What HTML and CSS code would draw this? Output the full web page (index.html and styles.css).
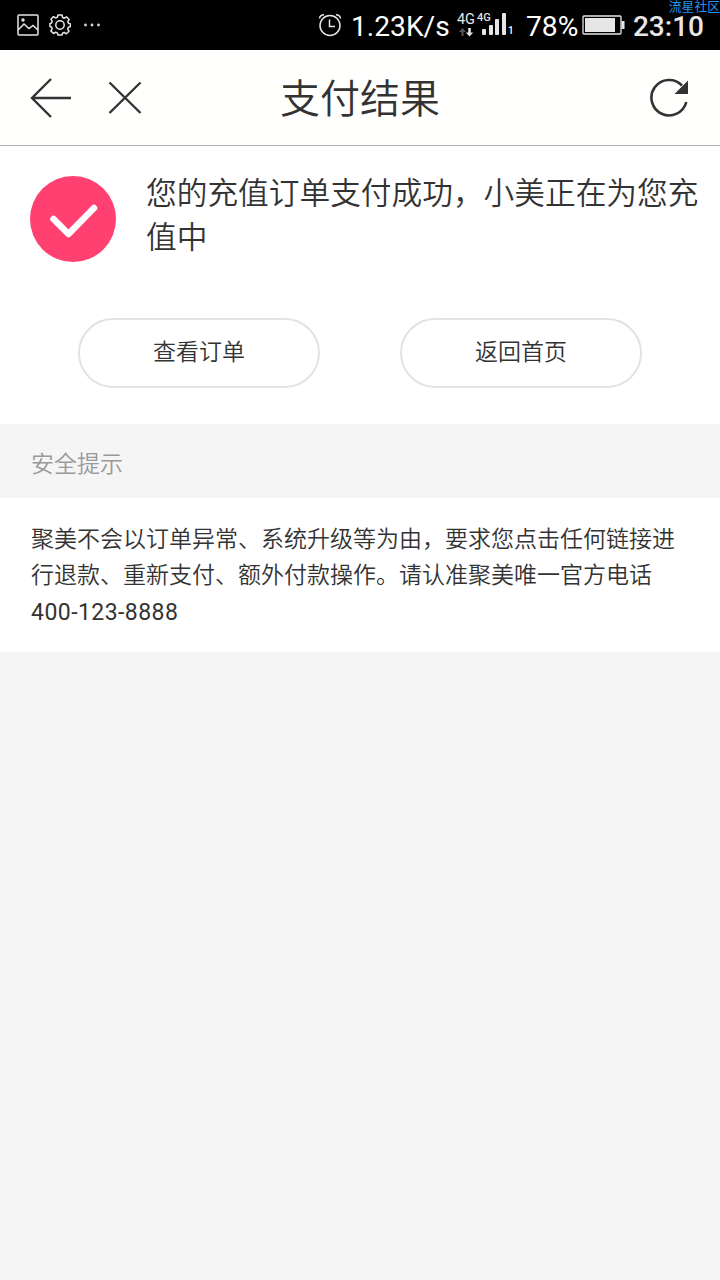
FILE: index.html
```html
<!DOCTYPE html>
<html lang="zh-CN">
<head>
  <meta charset="UTF-8">
  <title>支付结果</title>
  <link rel="stylesheet" href="styles.css">
</head>
<body>
  <div class="status-bar">
    <div class="status-left">
      <svg width="22" height="22" viewBox="0 0 22 22" fill="none" stroke="#e6e6e6" stroke-width="1.5">
        <rect x="1" y="1" width="20" height="20" rx="1"/>
        <path d="M1 16L7 10L12 14.5L16 11.5L21 16"/>
        <circle cx="6" cy="6" r="1.7" fill="#e6e6e6" stroke="none"/>
      </svg>
      <svg width="22" height="22" viewBox="0 0 22 22" fill="none" stroke="#e6e6e6" stroke-width="1.5" stroke-linejoin="round">
        <path d="M9 1h4l.6 2.500 1.700.7 2.200-1.300 2.600 2.600-1.300 2.200.7 1.600 2 .7v2.500l-2.100.8-.7 1.700 1.300 2.200-2.600 2.600-2.200-1.300-1.700.7L13 21H9l-.6-2.100-1.700-.7-2.200 1.300-2.600-2.600 1.300-2.200-.7-1.700L.9 12.500V9.700L2.500 9l.7-1.600-1.300-2.200 2.600-2.600 2.200 1.300 1.700-.7z"/>
        <circle cx="11" cy="11" r="4.2"/>
      </svg>
      <svg class="more" width="18" height="22" viewBox="0 0 18 22" fill="#d6d6d6">
        <circle cx="2.5" cy="11" r="1.4"/>
        <circle cx="9" cy="11" r="1.4"/>
        <circle cx="15.5" cy="11" r="1.4"/>
      </svg>
    </div>
    <div class="status-right">
      <svg class="alarm" width="24" height="24" viewBox="0 0 24 24" fill="none" stroke="#e6e6e6" stroke-width="1.5">
        <circle cx="12" cy="12.5" r="10"/>
        <path d="M11.500 6.500V13.500H17M1.500 5.500Q2 2 6 1.800M22.500 5.500Q22 2 18 1.800"/>
      </svg>
      <span class="speed">1.23K/s</span>
      <div class="network">
        <span class="net-big">4G</span>
        <svg width="16" height="10" viewBox="0 0 16 10">
          <path d="M4.500 0L8 4H5.500V8H3.500V4H1z" fill="#555"/>
          <path d="M11.500 8.500L15.200 4.500H12.800V0H10.200V4.500H7.800z" fill="#e6e6e6"/>
        </svg>
      </div>
      <div class="signal">
        <span class="net-small">4G</span>
        <svg width="36" height="24" viewBox="0 0 36 24" fill="#e6e6e6">
          <rect x="5" y="16" width="4" height="6" rx="1"/>
          <rect x="12" y="12" width="4" height="10" rx="1"/>
          <rect x="18" y="6" width="4" height="16" rx="1"/>
          <rect x="25" y="0" width="4" height="22" rx="1"/>
        </svg>
        <span class="sim">1</span>
      </div>
      <span class="percent">78%</span>
      <svg class="battery" width="43" height="20" viewBox="0 0 43 20">
        <rect x="1" y="1" width="38" height="18" rx="1" fill="none" stroke="#e6e6e6" stroke-width="1.3"/>
        <rect x="3" y="3" width="30" height="14" fill="#e6e6e6"/>
        <rect x="39.5" y="6" width="3" height="8" fill="#e6e6e6"/>
      </svg>
      <span class="time">23:10</span>
    </div>
    <span class="watermark">流星社区</span>
  </div>

  <header class="navbar">
    <div class="nav-left">
      <svg width="42" height="40" viewBox="0 0 42 40" fill="none" stroke="#333" stroke-width="2.4">
        <path d="M21 1L2 20L21 39M2 20H41"/>
      </svg>
      <svg width="34" height="34" viewBox="0 0 34 34" fill="none" stroke="#333" stroke-width="2.4">
        <path d="M1.500 1.500L32.500 32M32.500 1.500L1.500 32"/>
      </svg>
    </div>
    <h1>支付结果</h1>
    <svg class="refresh" width="40" height="40" viewBox="0 0 40 40">
      <path d="M32 7.500A17.700 17.700 0 1 0 36.300 24" fill="none" stroke="#333" stroke-width="2.6"/>
      <path d="M38 2.500V16H24.500z" fill="#333"/>
    </svg>
  </header>

  <section class="result">
    <div class="result-info">
      <svg class="success" width="86" height="86" viewBox="0 0 86 86">
        <circle cx="43" cy="43" r="43" fill="#ff4070"/>
        <path d="M23.500 43L38.500 58L64 32" fill="none" stroke="#fff" stroke-width="6.5" stroke-linecap="round" stroke-linejoin="round"/>
      </svg>
      <p>您的充值订单支付成功，小美正在为您充值中</p>
    </div>
    <div class="actions">
      <button class="btn">查看订单</button>
      <button class="btn">返回首页</button>
    </div>
  </section>

  <h2 class="tips-title">安全提示</h2>
  <section class="tips">
    <p>聚美不会以订单异常、系统升级等为由，要求您点击任何链接进行退款、重新支付、额外付款操作。请认准聚美唯一官方电话</p>
    <p class="phone">400-123-8888</p>
  </section>
</body>
</html>
```

FILE: styles.css
```css
* {
  box-sizing: border-box;
}

body {
  font-family: Roboto, 'Noto Sans CJK SC', sans-serif;
  margin: 0;
  padding: 0;
  background: #f5f5f5;
  color: #333;
  min-height: 100vh;
}

h1, h2, p {
  margin: 0;
  font-weight: 350;
}

svg {
  display: block;
  flex-shrink: 0;
}

/* status bar */
.status-bar {
  position: relative;
  display: flex;
  justify-content: space-between;
  height: 50px;
  padding: 0 16px 0 17px;
  background: #000;
  color: #fff;
}

.status-left {
  display: flex;
  align-items: center;
  gap: 10px;
}

.more {
  margin-left: 2px;
}

.status-right {
  display: flex;
  align-items: center;
  white-space: nowrap;
}

.alarm {
  margin-right: 9px;
}

.speed {
  width: 107px;
  font-size: 28.2px;
  line-height: 32px;
  padding-top: 3px;
}

.network {
  width: 19px;
}

.net-big {
  display: block;
  font-size: 14.5px;
  line-height: 15px;
  margin: -1px 0 1px -1px;
  color: #e6e6e6;
}

.signal {
  position: relative;
  width: 49px;
}

.net-small {
  position: absolute;
  left: 0;
  top: -1px;
  font-size: 11px;
  font-weight: 500;
  line-height: 11px;
  color: #e6e6e6;
}

.sim {
  position: absolute;
  left: 31px;
  top: 12px;
  font-size: 10px;
  font-weight: 500;
  line-height: 12px;
}

.percent {
  width: 56px;
  font-size: 28.2px;
  line-height: 32px;
  padding-top: 3px;
}

.battery {
  margin-right: 8px;
}

.time {
  font-size: 28px;
  font-weight: 500;
  line-height: 26px;
  padding-top: 3px;
  color: #e6e6e6;
}

.watermark {
  position: absolute;
  right: 0;
  top: 0;
  font-size: 12.8px;
  line-height: 13px;
  color: #2196f3;
}

/* title bar */
.navbar {
  display: flex;
  align-items: center;
  justify-content: space-between;
  height: 96px;
  padding: 0 30px;
  background: #fffffd;
  border-bottom: 1px solid #b0b0b0;
}

.nav-left {
  display: flex;
  align-items: center;
  gap: 36px;
  width: 120px;
}

.navbar h1 {
  padding-top: 5px;
  font-size: 40px;
  line-height: 60px;
}

.refresh {
  margin-left: 80px;
}

/* payment result */
.result {
  height: 278px;
  padding: 26px 20px 0 30px;
  background: #fff;
}

.result-info {
  display: flex;
  gap: 30px;
}

.success {
  margin-top: 4px;
}

.result-info p {
  font-size: 30.7px;
  line-height: 44px;
}

.actions {
  display: flex;
  justify-content: center;
  gap: 80px;
  margin-top: 56px;
  padding-right: 10px;
}

.btn {
  width: 242px;
  height: 70px;
  padding: 0 0 6px;
  border: 2px solid #e2e2e2;
  border-radius: 35px;
  background: #fff;
  color: #333;
  font-family: inherit;
  font-size: 23px;
  font-weight: 350;
}

/* safety tips */
.tips-title {
  height: 74px;
  padding-left: 31px;
  font-size: 23px;
  line-height: 82px;
  color: #999;
}

.tips {
  height: 154px;
  padding: 24px 31px 0;
  background: #fff;
  font-size: 23px;
  line-height: 36.3px;
}

.phone {
  font-weight: 400;
  letter-spacing: 0.45px;
}
```
